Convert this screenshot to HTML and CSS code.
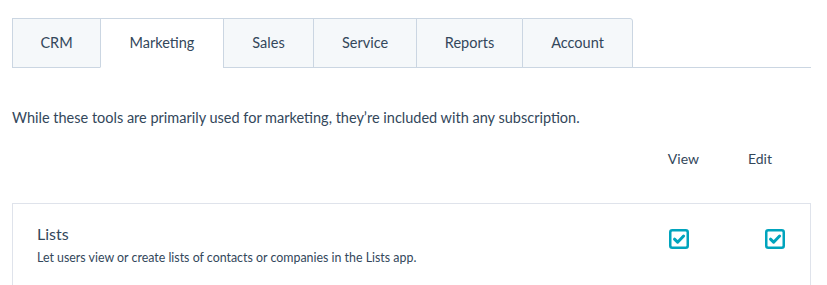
FILE: index.html
```html
<!DOCTYPE html>
<html lang="en">
  <head>
    <meta charset="utf-8">
    <title>Permissions</title>
    <link rel="stylesheet" href="styles.css">
  </head>
  <body>
    <div class="tabs">
      <div class="tab">CRM</div>
      <div class="tab tab-active">Marketing</div>
      <div class="tab">Sales</div>
      <div class="tab">Service</div>
      <div class="tab">Reports</div>
      <div class="tab tab-last">Account</div>
    </div>

    <p class="intro">
      While these tools are primarily used for marketing, they’re included with any subscription.
    </p>

    <div class="columns">
      <span class="col-label">View</span>
      <span class="col-label">Edit</span>
    </div>

    <div class="card">
      <div class="card-text">
        <div class="card-title">Lists</div>
        <div class="card-desc">Let users view or create lists of contacts or companies in the Lists app.</div>
      </div>
      <div class="checks">
        <span class="check">
          <svg width="20" height="20" viewBox="0 0 20 20">
            <rect x="1.25" y="1.25" width="17.5" height="17.5" rx="2" fill="none" stroke="#00a4bd" stroke-width="2.5"/>
            <path d="M5.5 10.2 L8.6 13.2 L14.6 7" fill="none" stroke="#00a4bd" stroke-width="3" stroke-linecap="round" stroke-linejoin="round"/>
          </svg>
        </span>
        <span class="check">
          <svg width="20" height="20" viewBox="0 0 20 20">
            <rect x="1.25" y="1.25" width="17.5" height="17.5" rx="2" fill="none" stroke="#00a4bd" stroke-width="2.5"/>
            <path d="M5.5 10.2 L8.6 13.2 L14.6 7" fill="none" stroke="#00a4bd" stroke-width="3" stroke-linecap="round" stroke-linejoin="round"/>
          </svg>
        </span>
      </div>
    </div>
  </body>
</html>
```

FILE: styles.css
```css
body {
  margin: 0;
  padding: 18px 16px 0 12px;
  font-family: Lato, "Noto Sans", sans-serif;
  color: #33475b;
  background: #ffffff;
}
.tabs {
  display: flex;
  border-bottom: 1px solid #cbd6e2;
}
.tab {
  height: 48px;
  line-height: 48px;
  text-align: center;
  font-size: 14.5px;
  background-color: #f5f8fa;
  border-top: 1px solid #cbd6e2;
  border-left: 1px solid #cbd6e2;
  margin-bottom: -1px;
  border-bottom: 1px solid #cbd6e2;
  box-sizing: content-box;
}
.tab:nth-child(1) { width: 87px; }
.tab:nth-child(2) { width: 122px; }
.tab:nth-child(3) { width: 89px; }
.tab:nth-child(4) { width: 102px; }
.tab:nth-child(5) { width: 105px; }
.tab:nth-child(6) { width: 109px; }
.tab-active {
  background-color: #ffffff;
  border-bottom-color: #ffffff;
}
.tab-last {
  border-right: 1px solid #cbd6e2;
  border-top-right-radius: 3px;
}
.intro {
  margin: 41px 0 0 0;
  font-size: 14.5px;
  line-height: 18px;
}
.columns {
  display: flex;
  justify-content: flex-end;
  gap: 49px;
  padding-right: 39px;
  margin-top: 23px;
  font-size: 14px;
  line-height: 18px;
}
.card {
  margin-top: 35px;
  border: 1px solid #dfe3eb;
  border-bottom: none;
  height: 90px;
  display: flex;
  justify-content: space-between;
  padding: 0 25px 0 24px;
}
.card-text {
  padding-top: 20px;
}
.card-title {
  font-size: 16px;
  line-height: 20px;
}
.card-desc {
  margin-top: 6px;
  font-size: 12.4px;
  line-height: 16px;
}
.checks {
  display: flex;
  gap: 76px;
  padding-top: 25px;
}
.check {
  width: 20px;
  height: 20px;
}
```
